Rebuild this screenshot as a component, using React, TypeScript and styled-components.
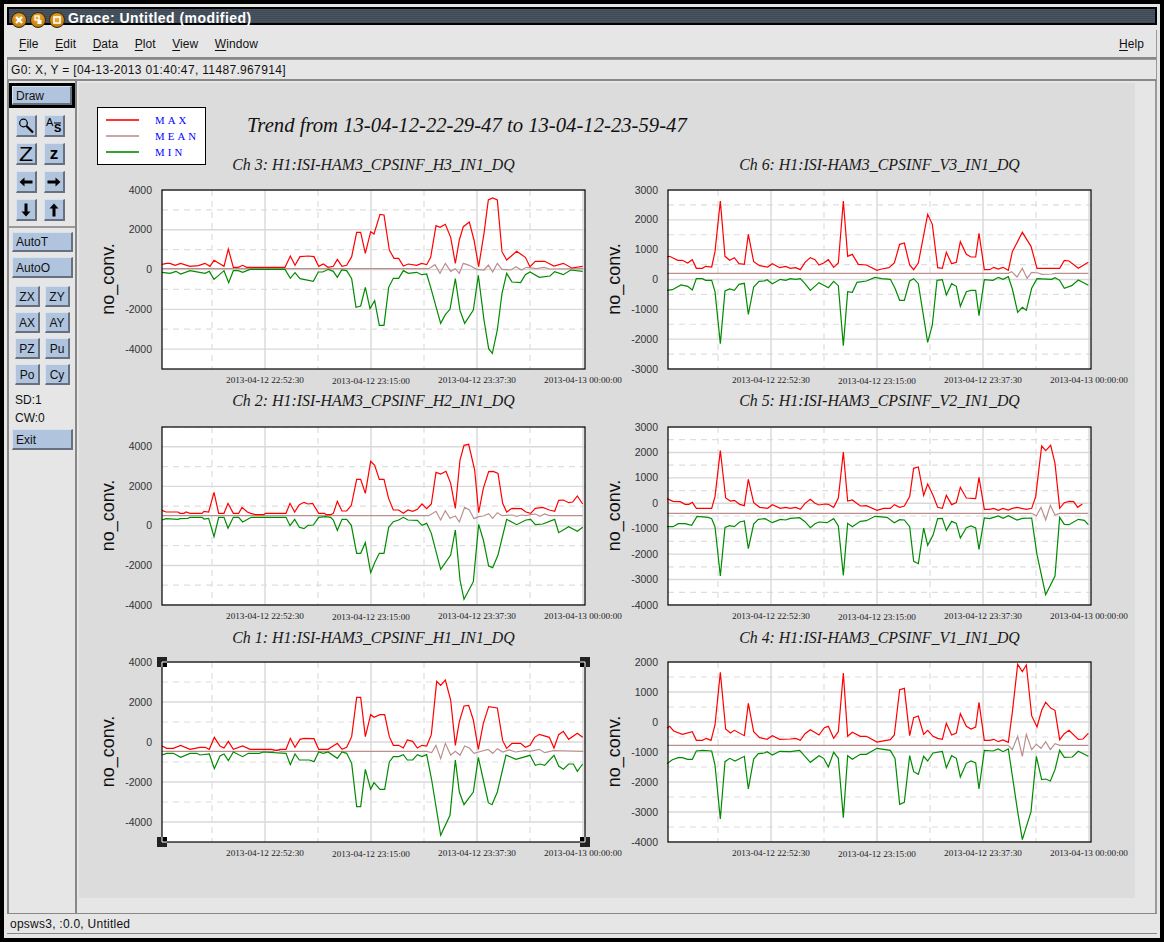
import React from "react";
import styled, { createGlobalStyle } from "styled-components";

const Global = createGlobalStyle`
  html, body { margin: 0; padding: 0; background: #000; overflow: hidden; }
  * { box-sizing: border-box; }
`;

const Screen = styled.div`
  width: 1164px; height: 942px; background: #000; padding: 4px;
  font-family: "Liberation Sans", Arial, sans-serif; font-size: 12px; color: #111;
`;
const Frame = styled.div`
  width: 1156px; height: 934px; background: #e6e6e6; padding: 3px;
  display: flex; flex-direction: column;
`;
const TitleBar = styled.div`
  height: 18px; flex: none; display: flex; align-items: flex-start; gap: 3px;
  border: 2px solid #000; padding-left: 2px;
  background: repeating-linear-gradient(180deg, #4a5562 0 1px, #3f4955 1px 2px);
`;
const WinButton = styled.svg`
  width: 16px; height: 16px; margin-top: 3px; flex: none; display: block;
`;
const TitleText = styled.div`
  margin: 2px 0 0 0; font-size: 14px; font-weight: bold; line-height: 14px; color: #fff; letter-spacing: 0.45px;
`;
const MenuBar = styled.div`
  margin-top: 5px; height: 29px; flex: none; display: flex; align-items: center; gap: 16.6px;
  padding: 0 12px; border-bottom: 2px solid #888; border-right: 1px solid #999;
  background: #e6e6e6;
`;
const MenuItem = styled.div<{ $push?: boolean }>`
  font-size: 12px; line-height: 14px; letter-spacing: 0.05px; margin-left: ${(p) => (p.$push ? "auto" : "0")};
  u { text-decoration: underline; text-underline-offset: 2px; }
`;
const Locator = styled.div`
  height: 22px; flex: none; display: flex; align-items: center; padding-left: 3px;
  border: 1px solid #999; border-bottom: 2px solid #888; font-size: 12px; letter-spacing: 0.34px;
`;
const Main = styled.div`
  height: 832px; flex: none; display: flex; border-right: 2px solid #999; margin-right: 0;
`;
const Side = styled.div`
  width: 70px; flex: none; display: flex; flex-direction: column; align-items: stretch;
  border-left: 2px solid #888; border-right: 2px solid #888;
`;
const DrawFrame = styled.div`
  margin: 2px 0 0; height: 25px; border: 3px solid #000; display: flex;
`;
const bevel = `
  background: #b0c4de; border-style: solid; border-width: 1px 2px 2px 1px;
  border-color: #d8e2ef #66707f #66707f #d8e2ef; color: #111; padding: 0;
  font-family: "Liberation Sans", Arial, sans-serif; font-size: 12px;
`;
const DrawButton = styled.button`
  ${bevel} flex: 1; text-align: left; padding: 1px 0 0 3px;
`;
const IconGrid = styled.div`
  margin: 7px 0 0 7px; display: grid; grid-template-columns: 21px 21px; grid-auto-rows: 22px; gap: 6px 7px;
`;
const IconButton = styled.button`
  ${bevel} display: flex; align-items: center; justify-content: center; overflow: visible;
  svg { display: block; }
`;
const IconGlyph = styled.span<{ $size: number; $bold?: boolean; $stretch?: number }>`
  display: inline-block; font-size: ${(p) => p.$size}px; line-height: 18px; color: #000;
  font-weight: ${(p) => (p.$bold ? "bold" : "normal")};
  transform: scaleX(${(p) => p.$stretch ?? 1});
`;
const Divider = styled.div`
  margin-top: 5px; height: 2px; background: #999;
`;
const WideButton = styled.button<{ $top: number; $h: number }>`
  ${bevel} margin: ${(p) => p.$top}px 2px 0 3px; height: ${(p) => p.$h}px; text-align: left; padding: 1px 0 0 3px; flex: none;
`;
const SmallGrid = styled.div`
  margin: 8px 0 0 6px; display: grid; grid-template-columns: 25px 25px; grid-auto-rows: 21px; gap: 5px;
`;
const SmallButton = styled.button`
  ${bevel} text-align: center; padding-top: 1px;
`;
const Readout = styled.div<{ $top: number }>`
  margin: ${(p) => p.$top}px 0 0 6px; height: 18px; line-height: 18px; font-size: 12px;
`;
const Canvas = styled.div`
  width: 1056px; height: 815px; margin: 2px 0 0 2px; background: #dcdcdc; flex: none; padding: 24px 0 0 11px;
`;
const Header = styled.div`
  height: 49px; display: flex; align-items: flex-start;
`;
const Legend = styled.div`
  width: 109px; height: 58px; margin-left: 7px; flex: none; background: #fff; border: 1px solid #000;
  padding: 4px 0 0 8px; display: flex; flex-direction: column; gap: 0; position: relative; z-index: 1;
`;
const LegendRow = styled.div`
  height: 16px; display: flex; align-items: center; gap: 16px;
`;
const Swatch = styled.div<{ $c: string }>`
  width: 33px; height: 2px; background: ${(p) => p.$c}; opacity: 0.8; flex: none;
`;
const LegendLabel = styled.div`
  font-family: "Liberation Serif", "Times New Roman", serif; font-size: 10.8px; letter-spacing: 3.1px; color: #0000ff; white-space: nowrap;
`;
const MainTitle = styled.div`
  margin: 5px 0 0 41px; font-family: "Liberation Serif", "Times New Roman", serif; font-style: italic;
  font-size: 20.7px; line-height: 26px; color: #111; white-space: nowrap;
`;
const PlotGrid = styled.div`
  display: grid; grid-template-columns: 506px 506px; grid-template-rows: 236px 237px 230px;
`;
const PlotCell = styled.div`
  width: 506px; display: flex; flex-direction: column;
`;
const PlotTitle = styled.div`
  height: 18px; line-height: 18px; margin-left: 72px; width: 423px; text-align: center;
  font-family: "Liberation Serif", "Times New Roman", serif; font-style: italic; font-size: 15.9px; color: #1a1a1a; white-space: nowrap;
`;
const PlotSvg = styled.svg`
  display: block; overflow: visible; width: 506px; height: 210px;
`;
const TickText = styled.text`
  font-family: "Liberation Sans", Arial, sans-serif; font-size: 10.5px; fill: #333;
`;
const DateText = styled.text`
  font-family: "Liberation Serif", "Times New Roman", serif; font-size: 9.2px; fill: #222;
`;
const AxisText = styled.text`
  font-family: "Liberation Sans", Arial, sans-serif; font-size: 18px; fill: #111;
`;
const Footer = styled.div`
  height: 21px; flex: none; display: flex; align-items: center; padding-left: 3px;
  border-top: 1px solid #888; border-bottom: 1px solid #888; font-size: 12px; letter-spacing: 0.25px;
`;

type Spec = {
  title: string; h: number; top: number; dx: number; dy: number;
  max: number; min: number; labelMax: number; labelMin: number; step: number;
  red: string; mean: string; green: string; selected?: boolean;
};

const plots: Spec[] = [
  {
    title: "Ch 3: H1:ISI-HAM3_CPSINF_H3_IN1_DQ", h: 179, top: 16, dx: -2, dy: -5, max: 4000, min: -5000, labelMax: 4000, labelMin: -4000, step: 2000,
    red: "6,238 20,235 30,235 45,241 62,235 90,244 115,242 135,235 150,244 162,226 192,244 205,192 220,247 235,247 248,241 260,247 375,247 391,213 405,241 420,215 445,213 462,215 476,244 490,237 504,247 520,244 532,223 546,244 560,241 575,215 590,142 602,142 616,205 632,140 642,147 660,88 672,90 688,195 702,220 716,220 730,243 745,237 770,241 785,235 800,239 812,217 828,122 840,127 856,118 872,157 886,235 898,165 910,125 928,111 942,165 956,245 972,145 985,45 998,39 1012,45 1026,200 1040,225 1070,199 1096,217 1110,245 1126,229 1154,229 1182,243 1210,235 1235,249 1268,244",
    mean: "6,251 806,251 825,239 840,265 856,235 872,259 886,251 898,265 910,235 928,241 950,253 972,255 985,240 998,261 1012,235 1026,253 1052,255 1068,245 1084,255 1100,247 1130,251 1152,247 1170,252 1270,251",
    green: "6,262 30,265 48,259 62,267 90,257 135,265 148,259 162,283 192,257 206,293 220,257 235,257 248,262 270,253 375,253 391,280 405,263 420,281 460,289 475,261 488,261 505,253 520,259 532,277 545,255 560,257 575,281 588,367 602,363 616,307 630,371 644,347 658,421 672,421 686,307 700,280 716,280 730,257 745,265 770,262 785,269 800,267 812,307 842,415 856,389 870,373 886,281 900,377 914,415 940,375 955,271 972,405 986,491 997,505 1012,435 1026,325 1040,265 1056,291 1082,293 1096,269 1110,261 1138,277 1170,273 1184,260 1210,269 1232,255 1268,259",
  },
  {
    title: "Ch 6: H1:ISI-HAM3_CPSINF_V3_IN1_DQ", h: 179, top: 16, dx: -3, dy: -5, max: 3000, min: -3000, labelMax: 3000, labelMin: -3000, step: 1000,
    red: "6,216 14,214 38,226 52,226 68,234 82,224 94,250 112,250 122,244 140,246 150,200 166,48 180,214 194,226 208,218 222,236 238,238 250,148 266,230 284,242 308,246 322,236 344,248 362,244 376,250 392,248 406,254 420,232 436,218 450,224 462,240 476,234 490,224 506,247 520,234 535,48 548,214 562,208 580,238 604,240 636,256 650,252 672,248 688,234 704,178 718,174 734,240 746,254 760,234 788,88 802,118 818,248 832,250 844,202 860,236 874,232 886,170 904,208 918,216 932,216 942,145 958,254 974,254 986,247 1000,252 1014,247 1030,256 1042,200 1072,142 1098,184 1116,250 1184,250 1198,226 1212,228 1240,250 1270,232",
    mean: "6,265 1030,265 1040,260 1056,276 1072,250 1086,280 1100,262 1120,264 1130,268 1160,267 1172,265 1270,265",
    green: "6,316 22,314 48,300 68,304 82,315 94,281 112,281 122,286 140,286 150,320 166,476 180,318 194,312 208,316 222,298 238,295 250,388 266,306 282,289 298,288 306,284 322,296 346,283 362,286 376,281 392,283 406,281 420,296 436,316 462,293 490,308 506,289 520,302 535,482 548,320 562,322 576,292 604,288 630,277 650,281 676,283 690,310 704,346 718,346 734,288 746,281 760,296 788,472 802,420 816,286 832,284 844,330 860,296 874,304 886,364 904,320 918,316 932,316 942,392 958,284 984,286 1000,277 1014,283 1030,275 1042,312 1058,382 1072,367 1084,376 1100,310 1116,281 1160,283 1170,278 1184,286 1198,310 1220,302 1240,285 1270,301",
  },
  {
    title: "Ch 2: H1:ISI-HAM3_CPSINF_H2_IN1_DQ", h: 178, top: 17, dx: -2, dy: -7, max: 5000, min: -4000, labelMax: 4000, labelMin: -4000, step: 2000,
    red: "6,271 18,276 54,276 60,280 72,280 78,276 90,280 126,280 132,274 146,276 162,217 176,280 192,280 204,250 220,280 236,280 246,262 262,276 272,280 286,284 312,284 316,280 378,280 390,250 404,276 418,254 432,247 444,252 458,250 476,280 494,280 498,284 512,284 520,280 532,244 546,273 560,273 574,256 590,178 602,178 616,220 632,124 644,136 658,178 672,178 686,236 700,270 716,270 730,280 744,270 758,274 772,268 786,252 800,266 814,252 828,157 842,162 858,154 872,190 886,265 900,120 912,76 926,73 944,150 956,278 970,205 986,155 1000,154 1014,160 1028,250 1040,276 1056,265 1084,266 1098,276 1112,280 1126,265 1148,262 1168,270 1184,274 1196,241 1210,240 1226,248 1238,246 1252,228 1268,252",
    mean: "6,287 806,287 828,274 842,300 856,272 870,295 886,288 898,306 914,262 928,270 942,296 956,290 970,288 986,281 998,295 1012,278 1026,287 1056,285 1070,289 1084,285 1098,287 1112,284 1126,282 1140,289 1154,282 1168,287 1268,287",
    green: "6,300 18,296 54,298 60,296 84,295 90,292 126,292 132,297 146,295 162,350 176,292 192,292 204,325 220,292 236,292 248,306 274,292 378,292 390,317 404,298 418,322 432,326 444,316 460,315 476,292 496,290 512,292 520,300 532,331 546,298 560,298 574,316 590,400 602,400 616,368 632,458 644,428 658,400 672,400 686,322 700,305 716,300 730,292 744,300 772,301 786,316 800,310 814,340 842,448 872,405 886,330 900,480 912,538 940,485 956,313 970,360 986,438 998,443 1014,405 1040,298 1070,314 1098,300 1112,298 1126,314 1148,312 1184,298 1196,338 1226,320 1252,334 1268,322",
  },
  {
    title: "Ch 5: H1:ISI-HAM3_CPSINF_V2_IN1_DQ", h: 178, top: 17, dx: -3, dy: -7, max: 3000, min: -4000, labelMax: 3000, labelMin: -4000, step: 1000,
    red: "6,236 24,244 46,245 60,253 72,253 82,247 94,265 140,265 150,230 166,92 182,234 196,243 208,241 224,253 238,257 250,178 266,248 284,262 308,265 322,254 346,265 362,262 376,265 392,262 406,268 420,250 436,238 450,250 462,255 480,252 490,253 506,262 520,234 535,96 548,243 562,240 586,258 604,257 636,271 656,265 676,265 688,254 704,262 718,258 734,230 746,145 760,141 776,226 788,192 804,226 818,262 832,265 844,226 860,254 874,248 886,202 904,234 932,236 942,172 958,268 974,268 986,265 1000,271 1014,265 1030,270 1042,265 1056,262 1084,268 1100,265 1112,230 1130,78 1142,92 1157,76 1170,130 1184,265 1198,248 1212,244 1226,245 1238,262 1252,252",
    mean: "6,280 1100,280 1114,287 1128,262 1142,300 1156,256 1170,285 1184,280 1270,280",
    green: "6,320 24,320 40,311 60,311 80,316 96,289 130,292 140,296 150,320 166,468 180,322 194,317 208,320 224,306 238,303 250,386 266,312 280,298 300,296 322,308 346,298 362,300 376,295 404,293 420,305 436,323 450,311 462,306 486,308 506,296 520,318 535,466 548,310 562,320 586,304 604,302 630,289 666,292 688,308 704,299 718,300 734,320 746,424 760,431 776,324 788,376 804,346 818,296 832,295 844,331 860,304 874,310 886,354 904,323 918,318 932,324 942,388 958,294 974,296 986,292 1000,288 1014,295 1030,287 1056,300 1072,295 1100,294 1116,404 1142,524 1170,468 1184,292 1198,313 1212,314 1240,298 1258,301 1270,314",
  },
  {
    title: "Ch 1: H1:ISI-HAM3_CPSINF_H1_IN1_DQ", h: 180, top: 15, dx: -2, dy: -7, max: 4000, min: -5000, labelMax: 4000, labelMin: -4000, step: 2000, selected: true,
    red: "6,273 20,280 40,280 62,271 90,283 120,277 135,277 148,283 163,247 180,273 192,279 205,259 220,283 248,273 270,283 335,283 350,287 360,283 378,283 391,250 405,277 420,253 432,250 462,251 476,283 504,283 532,265 546,283 560,277 575,245 590,127 602,127 616,245 632,179 642,187 660,179 674,179 688,245 700,271 716,271 730,279 742,255 758,259 772,279 786,271 800,273 814,239 830,79 842,91 856,75 872,135 886,271 898,200 912,153 926,151 940,195 955,283 970,205 986,155 1012,159 1028,257 1040,280 1056,265 1082,265 1096,277 1110,271 1124,247 1138,238 1168,247 1182,279 1196,239 1210,229 1226,253 1252,235 1268,247",
    mean: "6,289 340,289 350,285 362,289 800,289 815,293 828,271 842,311 856,265 872,300 886,289 900,301 914,273 928,279 942,295 956,291 984,283 998,295 1012,281 1028,291 1048,285 1066,291 1096,287 1110,289 1138,283 1154,293 1180,287 1270,289",
    green: "6,300 20,295 40,295 62,307 90,295 110,295 120,300 148,297 163,341 180,303 192,297 205,317 220,291 248,305 265,295 298,295 310,291 378,295 391,329 405,297 418,315 448,315 462,320 476,291 490,295 504,291 532,310 546,291 560,295 575,325 590,455 602,455 616,343 632,403 642,383 660,403 674,403 688,321 700,305 716,305 730,299 742,315 758,315 772,299 786,305 800,299 815,375 842,541 870,481 886,315 898,411 912,449 940,411 955,307 970,375 985,443 996,449 1012,411 1038,300 1068,313 1110,301 1126,331 1140,327 1154,331 1182,301 1196,333 1210,343 1226,327 1240,327 1252,349 1268,327",
  },
  {
    title: "Ch 4: H1:ISI-HAM3_CPSINF_V1_IN1_DQ", h: 180, top: 15, dx: -3, dy: -7, max: 2000, min: -4000, labelMax: 2000, labelMin: -4000, step: 1000,
    red: "6,220 14,214 26,228 52,238 82,230 94,256 112,256 124,250 138,256 150,210 166,52 182,222 196,234 208,226 238,242 250,145 266,230 284,248 306,253 322,242 344,253 376,252 392,250 406,256 420,236 436,224 462,240 478,218 490,214 506,250 520,230 535,54 548,244 562,232 586,244 604,244 636,261 676,254 688,240 704,104 718,100 734,242 746,188 760,183 776,238 788,226 804,244 818,250 832,253 844,205 860,240 874,234 886,176 904,214 918,222 932,216 942,142 958,256 974,256 986,253 1000,260 1014,255 1030,262 1042,172 1058,28 1072,50 1084,30 1100,182 1116,216 1130,166 1142,142 1158,160 1170,166 1184,254 1198,236 1212,226 1240,253 1254,252 1270,235",
    mean: "6,271 1030,271 1042,284 1058,244 1072,304 1084,238 1100,284 1114,268 1128,280 1142,260 1156,284 1170,266 1184,271 1270,271",
    green: "6,326 22,314 40,308 52,308 68,313 82,313 94,288 112,286 140,288 150,330 166,492 180,320 194,310 210,318 238,304 250,402 266,312 280,296 298,294 306,290 322,300 344,289 376,290 404,286 420,304 436,322 462,302 476,310 490,336 506,292 520,310 535,488 548,302 562,313 586,298 604,298 636,280 676,286 690,310 704,448 718,442 734,302 746,350 760,358 776,304 788,318 804,294 832,289 844,338 860,302 874,310 886,366 904,325 918,318 932,324 942,402 958,286 984,288 1000,282 1014,290 1030,282 1058,470 1072,554 1098,470 1114,304 1130,374 1142,372 1156,378 1170,344 1184,286 1198,307 1222,306 1240,289 1270,304",
  },
];

const PLOT_X = 72;
const PLOT_W = 423;
const majorX = [103, 209, 315, 421];
const minorX = [50, 156, 262, 368];
const dates = ["2013-04-12 22:52:30", "2013-04-12 23:15:00", "2013-04-12 23:37:30", "2013-04-13 00:00:00"];

function project(raw: string, s: Spec) {
  return raw
    .split(" ")
    .map((p) => {
      const [a, b] = p.split(",").map(Number);
      return `${(PLOT_X + a / 3 + s.dx).toFixed(2)},${(s.top + b / 3 + s.dy).toFixed(2)}`;
    })
    .join(" ");
}

function Handle({ x, y, sx, sy }: { x: number; y: number; sx: number; sy: number }) {
  return (
    <g>
      <rect x={x - 5} y={y - 5} width={10} height={10} fill="#222" />
      <rect x={sx > 0 ? x : x - 5} y={sy > 0 ? y : y - 5} width={5} height={5} fill="#000" />
      <line x1={x} y1={y} x2={x} y2={y + sy * 5} stroke="#fff" strokeWidth={1} />
      <line x1={x} y1={y} x2={x + sx * 5} y2={y} stroke="#fff" strokeWidth={1} />
    </g>
  );
}

function Plot({ s }: { s: Spec }) {
  const yOf = (v: number) => s.top + (s.h * (s.max - v)) / (s.max - s.min);
  const majors: number[] = [];
  for (let v = s.labelMax; v >= s.labelMin; v -= s.step) majors.push(v);
  const minors: number[] = [];
  for (let v = s.labelMax - s.step / 2; v > s.min; v -= s.step) minors.push(v);
  if (s.max > s.labelMax) minors.unshift(s.labelMax + s.step / 2);
  const bottom = s.top + s.h;
  const right = PLOT_X + PLOT_W;
  return (
    <PlotCell>
      <PlotTitle>{s.title}</PlotTitle>
      <PlotSvg viewBox="0 0 506 210">
        <rect x={PLOT_X} y={s.top} width={PLOT_W} height={s.h} fill="#fff" />
        {minors.map((v) => (
          <line key={v} x1={PLOT_X} x2={right} y1={yOf(v)} y2={yOf(v)} stroke="#dedede" strokeWidth={1.2} strokeDasharray="6 5" />
        ))}
        {majors.map((v) => (
          <line key={v} x1={PLOT_X} x2={right} y1={yOf(v)} y2={yOf(v)} stroke="#d9d9d9" strokeWidth={1.4} />
        ))}
        {minorX.map((x) => (
          <line key={x} x1={PLOT_X + x} x2={PLOT_X + x} y1={s.top} y2={bottom} stroke="#dedede" strokeWidth={1.2} strokeDasharray="6 5" />
        ))}
        {majorX.map((x) => (
          <line key={x} x1={PLOT_X + x} x2={PLOT_X + x} y1={s.top} y2={bottom} stroke="#d9d9d9" strokeWidth={1.4} />
        ))}
        <polyline points={project(s.mean, s)} fill="none" stroke="#bc8f8f" strokeWidth={1.2} />
        <polyline points={project(s.red, s)} fill="none" stroke="#ff0000" strokeWidth={1.2} />
        <polyline points={project(s.green, s)} fill="none" stroke="#008b00" strokeWidth={1.2} />
        <rect x={PLOT_X} y={s.top} width={PLOT_W} height={s.h} fill="none" stroke="#000" strokeWidth={1.2} />
        {majors.map((v) => (
          <TickText key={v} x={PLOT_X - 10} y={yOf(v) + 3.5} textAnchor="end">
            {v}
          </TickText>
        ))}
        {dates.map((d, i) => (
          <DateText key={d} x={PLOT_X + majorX[i]} y={bottom + 14 + (i === 1 ? 1 : 0)} textAnchor="middle">
            {d}
          </DateText>
        ))}
        <AxisText transform={`translate(${PLOT_X - 48},${s.top + s.h / 2 - 0.5}) rotate(-90)`} textAnchor="middle">
          no_conv.
        </AxisText>
        {s.selected && (
          <g>
            <Handle x={PLOT_X} y={s.top} sx={1} sy={1} />
            <Handle x={right} y={s.top} sx={-1} sy={1} />
            <Handle x={PLOT_X} y={bottom} sx={1} sy={-1} />
            <Handle x={right} y={bottom} sx={-1} sy={-1} />
          </g>
        )}
      </PlotSvg>
    </PlotCell>
  );
}

function Orb({ children }: { children: React.ReactNode }) {
  return (
    <WinButton viewBox="0 0 16 16">
      <defs>
        <radialGradient id="orb" cx="50%" cy="40%" r="60%">
          <stop offset="0%" stopColor="#f4b340" />
          <stop offset="100%" stopColor="#b87408" />
        </radialGradient>
      </defs>
      <circle cx="8" cy="8" r="7.5" fill="url(#orb)" stroke="#3a2a08" strokeWidth="1" />
      {children}
    </WinButton>
  );
}

const Arrow = ({ rotate }: { rotate: number }) => (
  <svg width="16" height="16" viewBox="0 0 16 16">
    <path transform={`rotate(${rotate} 8 8)`} d="M1.5 8 L6.5 3.5 V6.5 H14.5 V9.5 H6.5 V12.5 Z" fill="#000" />
  </svg>
);

const GlyphText = styled.text<{ $size: number; $bold?: boolean }>`
  font-family: "Liberation Sans", Arial, sans-serif; font-size: ${(p) => p.$size}px;
  font-weight: ${(p) => (p.$bold ? "bold" : "normal")}; fill: #000;
`;

export default function App() {
  return (
    <Screen>
      <Global />
      <Frame>
        <TitleBar>
          <Orb>
            <path d="M5 5 L11 11 M11 5 L5 11" stroke="#fff" strokeWidth="2.2" />
          </Orb>
          <Orb>
            <rect x="5" y="4" width="4" height="4" fill="none" stroke="#fff" strokeWidth="1.3" />
            <rect x="7.5" y="8" width="4" height="4" fill="#fff" />
          </Orb>
          <Orb>
            <rect x="5" y="5" width="6" height="6" fill="none" stroke="#fff" strokeWidth="1.6" />
          </Orb>
          <TitleText>Grace: Untitled (modified)</TitleText>
        </TitleBar>
        <MenuBar>
          <MenuItem><u>F</u>ile</MenuItem>
          <MenuItem><u>E</u>dit</MenuItem>
          <MenuItem><u>D</u>ata</MenuItem>
          <MenuItem><u>P</u>lot</MenuItem>
          <MenuItem><u>V</u>iew</MenuItem>
          <MenuItem><u>W</u>indow</MenuItem>
          <MenuItem $push><u>H</u>elp</MenuItem>
        </MenuBar>
        <Locator>G0: X, Y = [04-13-2013 01:40:47, 11487.967914]</Locator>
        <Main>
          <Side>
            <DrawFrame>
              <DrawButton>Draw</DrawButton>
            </DrawFrame>
            <IconGrid>
              <IconButton>
                <svg width="18" height="18" viewBox="0 0 18 18">
                  <circle cx="6.5" cy="6" r="3.8" fill="none" stroke="#000" strokeWidth="1.2" />
                  <path d="M9.5 9 L16 15.5" stroke="#000" strokeWidth="2.2" />
                </svg>
              </IconButton>
              <IconButton>
                <svg width="18" height="18" viewBox="0 0 18 18">
                  <GlyphText $size={11} x="1" y="9">A</GlyphText>
                  <GlyphText $size={11} $bold x="9" y="15">S</GlyphText>
                  <path d="M9 6 H16" stroke="#000" strokeWidth="1" />
                </svg>
              </IconButton>
              <IconButton><IconGlyph $size={20} $stretch={1.15}>Z</IconGlyph></IconButton>
              <IconButton><IconGlyph $size={17} $bold>z</IconGlyph></IconButton>
              <IconButton><Arrow rotate={0} /></IconButton>
              <IconButton><Arrow rotate={180} /></IconButton>
              <IconButton><Arrow rotate={270} /></IconButton>
              <IconButton><Arrow rotate={90} /></IconButton>
            </IconGrid>
            <Divider />
            <WideButton $top={4} $h={20}>AutoT</WideButton>
            <WideButton $top={5} $h={21}>AutoO</WideButton>
            <SmallGrid>
              {["ZX", "ZY", "AX", "AY", "PZ", "Pu", "Po", "Cy"].map((t) => (
                <SmallButton key={t}>{t}</SmallButton>
              ))}
            </SmallGrid>
            <Readout $top={6}>SD:1</Readout>
            <Readout $top={0}>CW:0</Readout>
            <WideButton $top={2} $h={21}>Exit</WideButton>
          </Side>
          <Canvas>
            <Header>
              <Legend>
                <LegendRow><Swatch $c="#ff0000" /><LegendLabel>MAX</LegendLabel></LegendRow>
                <LegendRow><Swatch $c="#bc8f8f" /><LegendLabel>MEAN</LegendLabel></LegendRow>
                <LegendRow><Swatch $c="#008b00" /><LegendLabel>MIN</LegendLabel></LegendRow>
              </Legend>
              <MainTitle>Trend from 13-04-12-22-29-47 to 13-04-12-23-59-47</MainTitle>
            </Header>
            <PlotGrid>
              {plots.map((s) => (
                <Plot key={s.title} s={s} />
              ))}
            </PlotGrid>
          </Canvas>
        </Main>
        <Footer>opsws3, :0.0, Untitled</Footer>
      </Frame>
    </Screen>
  );
}
